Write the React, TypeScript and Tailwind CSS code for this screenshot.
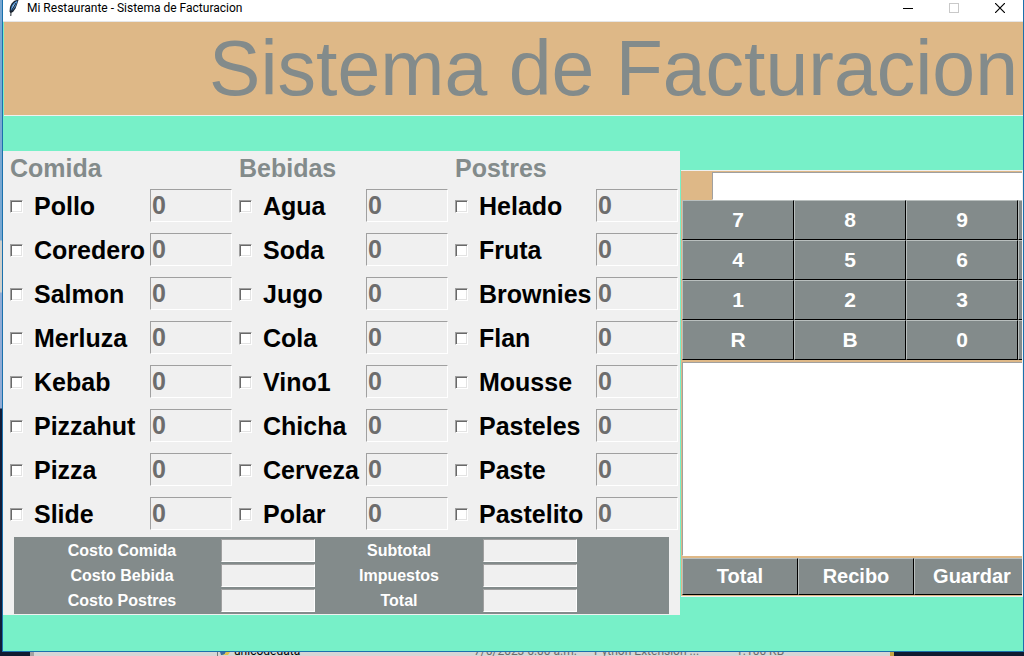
import { useState } from "react";

type Category = { title: string; items: string[]; width: string };

const categories: Category[] = [
  {
    title: "Comida",
    items: ["Pollo", "Coredero", "Salmon", "Merluza", "Kebab", "Pizzahut", "Pizza", "Slide"],
    width: "w-[229px]",
  },
  {
    title: "Bebidas",
    items: ["Agua", "Soda", "Jugo", "Cola", "Vino1", "Chicha", "Cerveza", "Polar"],
    width: "w-[216px]",
  },
  {
    title: "Postres",
    items: ["Helado", "Fruta", "Brownies", "Flan", "Mousse", "Pasteles", "Paste", "Pastelito"],
    width: "w-[230px]",
  },
];

const costRows = [
  ["Costo Comida", "Subtotal"],
  ["Costo Bebida", "Impuestos"],
  ["Costo Postres", "Total"],
];

const keys = ["7", "8", "9", "4", "5", "6", "1", "2", "3", "R", "B", "0"];
const keyRows = [keys.slice(0, 3), keys.slice(3, 6), keys.slice(6, 9), keys.slice(9, 12)];
const actions = ["Total", "Recibo", "Guardar"];

const raised =
  "shrink-0 border border-t-[#b9bfbe] border-l-[#b9bfbe] border-r-black border-b-black bg-[#838b8b] font-bold text-white";
const sunken =
  "border border-t-[#a0a0a0] border-l-[#a0a0a0] border-r-white border-b-white rounded-none outline-none";

function Feather() {
  return (
    <svg viewBox="0 0 12 18" className="h-[18px] w-3" aria-hidden="true">
      <path d="M9.500 0C6 0 3 3.500 2 7L1.500 11.500L2.500 13L5 12L7.500 8.500L9 4.500L10.500 0Z" fill="#16202c" />
      <path d="M9.500 0.500C6 2 3.500 5 3 8.500L2.800 11L5 10L7.500 6.500L9 3Z" fill="#4488cd" />
      <path d="M8.500 1.500L5 5.500L3.800 9L6.500 6Z" fill="#a9d3f5" />
      <path d="M8 3L4.500 9L3 12L2.800 16" fill="none" stroke="#1b2530" strokeWidth="1" />
    </svg>
  );
}

function TitleBar() {
  return (
    <header className="flex h-[22px] shrink-0 items-start justify-between border-b border-[#e6e6e6] bg-white pl-[5px]">
      <div className="flex items-start gap-1">
        <Feather />
        <span className="pl-[3px] font-[Roboto,'Noto_Sans',sans-serif] text-[12px] leading-4 text-black">
          Mi Restaurante - Sistema de Facturacion
        </span>
      </div>
      <div className="flex">
        <button aria-label="Minimizar" className="flex h-4 w-[46px] items-center justify-center">
          <svg viewBox="0 0 10 10" className="h-[10px] w-[10px]" shapeRendering="crispEdges">
            <path d="M0 5.500H10" stroke="#000" />
          </svg>
        </button>
        <button aria-label="Maximizar" disabled className="flex h-4 w-[46px] items-center justify-center">
          <svg viewBox="0 0 10 10" className="h-[10px] w-[10px]" shapeRendering="crispEdges">
            <rect x="0.500" y="0.500" width="9" height="9" fill="none" stroke="#c9c9c9" />
          </svg>
        </button>
        <button aria-label="Cerrar" className="flex h-4 w-[46px] items-center justify-center">
          <svg viewBox="0 0 10 10" className="h-[10px] w-[10px]">
            <path d="M0 0L10 10M10 0L0 10" stroke="#000" strokeWidth="1.200" />
          </svg>
        </button>
      </div>
    </header>
  );
}

function MenuColumn({ title, items, width }: Category) {
  return (
    <section className={`${width} pl-[7px]`}>
      <h2 className="h-[33px] text-[25px] leading-[34px] font-bold text-[#838b8b]">{title}</h2>
      {items.map((item) => (
        <div key={item} className="flex h-11 items-center justify-between">
          <label className="flex items-center gap-[11px] text-[25px] leading-8 font-bold whitespace-nowrap text-black">
            <input
              type="checkbox"
              className="h-[13px] w-[13px] shrink-0 appearance-none border border-t-[#a0a0a0] border-r-white border-b-white border-l-[#a0a0a0] bg-white shadow-[inset_1px_1px_0_#696969,inset_-1px_-1px_0_#e3e3e3] checked:bg-[#838b8b]"
            />
            {item}
          </label>
          <input
            aria-label={`Cantidad de ${item}`}
            defaultValue="0"
            disabled
            className={`${sunken} mb-px h-[33px] w-[82px] bg-[#f0f0f0] pl-px text-[25px] leading-[31px] font-bold text-[#6d6d6d]`}
          />
        </div>
      ))}
    </section>
  );
}

function Costs() {
  return (
    <div className="mt-px mr-[11px] ml-[11px] grid grid-cols-[207px_94px_168px_94px] items-center bg-[#838b8b] pt-px pb-px">
      {costRows.map((row) =>
        row.map((name, i) => (
          <div key={name + i} className="contents">
            <label
              htmlFor={`costo-${name}-${i}`}
              className={`text-center text-[16px] leading-[25px] font-bold text-white ${i === 0 ? "pl-[9px]" : ""}`}
            >
              {name}
            </label>
            <input
              id={`costo-${name}-${i}`}
              readOnly
              className={`${sunken} h-[23px] w-full bg-[#f0f0f0] px-1 text-[16px] font-bold`}
            />
          </div>
        )),
      )}
    </div>
  );
}

function Register() {
  const [display, setDisplay] = useState("");
  const press = (key: string) => {
    if (key === "B") setDisplay("");
    else if (key !== "R") setDisplay(display + key);
  };
  return (
    <aside className="ml-px min-w-0 flex-1 overflow-hidden border-t border-r border-b border-[#f0f0f0] bg-[#deb887] pt-px pb-px pl-px">
      <div className="flex pl-[30px]">
        <input
          aria-label="Calculadora"
          value={display}
          onChange={(e) => setDisplay(e.target.value)}
          className={`${sunken} h-7 min-w-0 flex-1 border-r-0 bg-white px-1 text-right text-[21px] font-bold`}
        />
      </div>
      {keyRows.map((row) => (
        <div key={row[0]} className="flex">
          {row.map((key) => (
            <button key={key} onClick={() => press(key)} className={`${raised} h-10 w-28 text-[21px] leading-[38px]`}>
              {key}
            </button>
          ))}
          <div className="h-10 flex-1 border-t border-b border-l border-t-[#b9bfbe] border-b-black border-l-[#b9bfbe] bg-[#838b8b]" />
        </div>
      ))}
      <textarea
        aria-label="Recibo"
        className="mt-[2px] mb-[2px] block h-[194px] w-full resize-none border-t border-b border-l border-t-[#a0a0a0] border-b-white border-l-[#a0a0a0] bg-white p-1 outline-none"
      />
      <div className="flex">
        {actions.map((action) => (
          <button key={action} className={`${raised} h-[37px] w-[116px] text-[20px] leading-[35px]`}>
            {action}
          </button>
        ))}
      </div>
    </aside>
  );
}

function FilesBehind() {
  return (
    <div className="flex h-1 shrink-0 overflow-hidden bg-[#101a30] font-[Roboto,'Noto_Sans',sans-serif] text-[12px] leading-4 text-[#6b6b6b]">
      <div className="ml-[30px] flex w-[864px] border-r-4 border-l-4 border-r-[#c4a544] border-l-[#a3a3a3] bg-[#d6d6d6]">
        <div className="ml-[183px] flex w-[257px] items-start gap-1 border-l border-[#777777]">
          <svg viewBox="0 0 10 4" className="ml-[2px] h-1 w-[10px]" aria-hidden="true">
            <path d="M0 0H6L4 3H1Z" fill="#3c6e9f" />
            <path d="M6 0H10L8 3H2L5 2Z" fill="#e3c34b" />
          </svg>
          <span className="-mt-[9px] text-black">unicodedata</span>
        </div>
        <span className="-mt-[9px] w-[120px]">7/6/2023 6:00 a.m.</span>
        <span className="-mt-[9px] w-[142px]">Python Extension ...</span>
        <span className="-mt-[9px]">1.100 KB</span>
      </div>
    </div>
  );
}

export default function App() {
  return (
    <div className="flex h-screen flex-col overflow-hidden font-['Liberation_Sans',Arial,sans-serif]">
      <div className="flex min-h-0 flex-1">
        <div className="w-[2px] shrink-0 bg-[linear-gradient(to_bottom,#79a8d2_0px,#79a8d2_240px,#d0d0cc_241px,#d0d0cc_292px,#91acd6_293px,#91acd6_408px,#101c38_409px)]" />
        <div className="flex min-w-0 flex-1 flex-col border-r border-b border-l border-[#1a71ad] bg-[#77f0c8]">
          <TitleBar />
          <div className="ml-px shrink-0 border-b border-[#f0f0f0] bg-[#deb887] pr-[5px] text-right">
            <h1 className="text-[77px] leading-[93px] whitespace-nowrap text-[#838b8b]">Sistema de Facturacion</h1>
          </div>
          <main className="flex min-h-0 flex-1 items-center pb-px">
            <section className="w-[677px] shrink-0 bg-[#f0f0f0] pb-px">
              <div className="flex">
                {categories.map((category) => (
                  <MenuColumn key={category.title} {...category} />
                ))}
              </div>
              <Costs />
            </section>
            <Register />
          </main>
        </div>
      </div>
      <FilesBehind />
    </div>
  );
}
